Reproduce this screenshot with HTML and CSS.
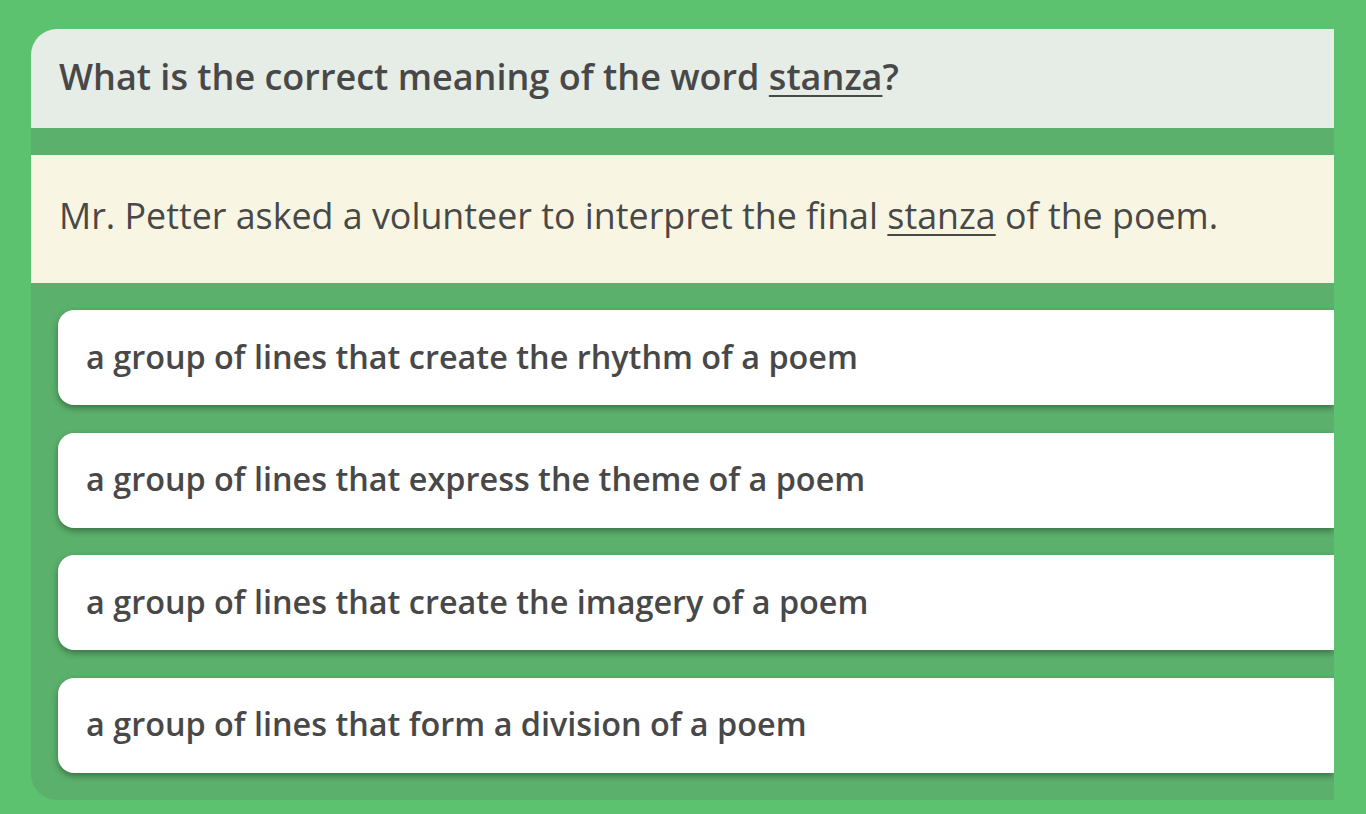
FILE: index.html
```html
<!DOCTYPE html>
<html lang="en">
<head>
<meta charset="utf-8">
<title>Quiz</title>
<link rel="stylesheet" href="styles.css">
</head>
<body>
<main class="quiz">
  <header class="question">
    <h1 class="question-text">What is the correct meaning of the word <u>stanza</u>?</h1>
  </header>
  <section class="passage">
    <p class="passage-text">Mr. Petter asked a volunteer to interpret the final <u>stanza</u> of the poem.</p>
  </section>
  <ul class="options">
    <li class="option">a group of lines that create the rhythm of a poem</li>
    <li class="option">a group of lines that express the theme of a poem</li>
    <li class="option">a group of lines that create the imagery of a poem</li>
    <li class="option">a group of lines that form a division of a poem</li>
  </ul>
</main>
</body>
</html>
```
FILE: styles.css
```css
html, body {
  margin: 0;
  padding: 0;
}
body {
  background: #5dc26f;
  font-family: "Open Sans", "Liberation Sans", sans-serif;
  color: #484848;
  height: 814px;
  overflow: hidden;
  padding: 29px 0 0 31px;
  box-sizing: border-box;
}
.quiz {
  width: 1303px;
  height: 771px;
  background: #5bb06c;
  border-radius: 26px 0 0 26px;
  overflow: hidden;
  display: flex;
  flex-direction: column;
}
.question {
  background: #e6ede7;
  height: 99px;
  display: flex;
  align-items: center;
  padding: 0 0 4px 28px;
  box-sizing: border-box;
}
.question-text {
  margin: 0;
  font-size: 36px;
  font-weight: 600;
}
.passage {
  margin-top: 27px;
  background: #f8f6e3;
  height: 128px;
  display: flex;
  align-items: center;
  padding: 0 0 8px 28px;
  box-sizing: border-box;
}
.passage-text {
  margin: 0;
  font-size: 35.8px;
  font-weight: 400;
}
u {
  text-decoration-thickness: 2px;
  text-underline-offset: 5px;
}
.options {
  list-style: none;
  margin: 27px 0 0 27px;
  padding: 0;
  display: flex;
  flex-direction: column;
  gap: 27.5px;
}
.option {
  background: #fff;
  height: 95px;
  border-radius: 16px 0 0 16px;
  box-shadow: 0 3px 6px rgba(0, 0, 0, 0.35);
  display: flex;
  align-items: center;
  padding: 0 0 4px 28px;
  box-sizing: border-box;
  font-size: 32.4px;
  font-weight: 600;
}
```
